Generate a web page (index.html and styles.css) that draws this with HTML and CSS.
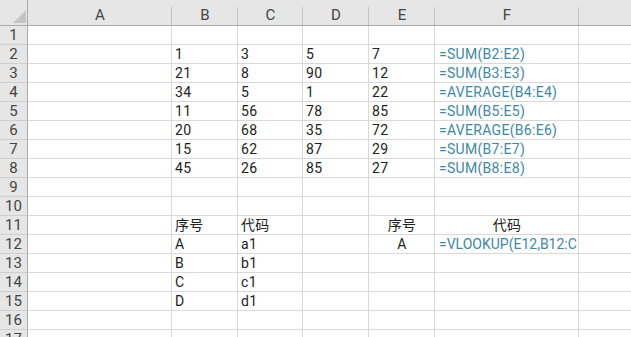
FILE: index.html
```html
<!DOCTYPE html>
<html>
<head>
<meta charset="utf-8">
<link rel="stylesheet" href="styles.css">
</head>
<body>
<div class="sheet">
  <div class="corner"><svg width="13" height="13" viewBox="0 0 13 13"><polygon points="13,0 13,13 0,13" fill="#c4c4c4"/></svg></div>
  <div class="colh">A</div><div class="colh">B</div><div class="colh">C</div><div class="colh">D</div><div class="colh">E</div><div class="colh">F</div><div class="colh last"></div>

  <div class="rowh">1</div><div class="c"></div><div class="c"></div><div class="c"></div><div class="c"></div><div class="c"></div><div class="c"></div><div class="c"></div>
  <div class="rowh">2</div><div class="c"></div><div class="c">1</div><div class="c">3</div><div class="c">5</div><div class="c">7</div><div class="c f">=SUM(B2:E2)</div><div class="c"></div>
  <div class="rowh">3</div><div class="c"></div><div class="c">21</div><div class="c">8</div><div class="c">90</div><div class="c">12</div><div class="c f">=SUM(B3:E3)</div><div class="c"></div>
  <div class="rowh">4</div><div class="c"></div><div class="c">34</div><div class="c">5</div><div class="c">1</div><div class="c">22</div><div class="c f">=AVERAGE(B4:E4)</div><div class="c"></div>
  <div class="rowh">5</div><div class="c"></div><div class="c">11</div><div class="c">56</div><div class="c">78</div><div class="c">85</div><div class="c f">=SUM(B5:E5)</div><div class="c"></div>
  <div class="rowh">6</div><div class="c"></div><div class="c">20</div><div class="c">68</div><div class="c">35</div><div class="c">72</div><div class="c f">=AVERAGE(B6:E6)</div><div class="c"></div>
  <div class="rowh">7</div><div class="c"></div><div class="c">15</div><div class="c">62</div><div class="c">87</div><div class="c">29</div><div class="c f">=SUM(B7:E7)</div><div class="c"></div>
  <div class="rowh">8</div><div class="c"></div><div class="c">45</div><div class="c">26</div><div class="c">85</div><div class="c">27</div><div class="c f">=SUM(B8:E8)</div><div class="c"></div>
  <div class="rowh">9</div><div class="c"></div><div class="c"></div><div class="c"></div><div class="c"></div><div class="c"></div><div class="c"></div><div class="c"></div>
  <div class="rowh">10</div><div class="c"></div><div class="c"></div><div class="c"></div><div class="c"></div><div class="c"></div><div class="c"></div><div class="c"></div>
  <div class="rowh">11</div><div class="c"></div><div class="c">序号</div><div class="c">代码</div><div class="c"></div><div class="c ctr">序号</div><div class="c ctr">代码</div><div class="c"></div>
  <div class="rowh">12</div><div class="c"></div><div class="c">A</div><div class="c">a1</div><div class="c"></div><div class="c ctr">A</div><div class="c f clip">=VLOOKUP(E12,B12:C</div><div class="c"></div>
  <div class="rowh">13</div><div class="c"></div><div class="c">B</div><div class="c">b1</div><div class="c"></div><div class="c"></div><div class="c"></div><div class="c"></div>
  <div class="rowh">14</div><div class="c"></div><div class="c">C</div><div class="c">c1</div><div class="c"></div><div class="c"></div><div class="c"></div><div class="c"></div>
  <div class="rowh">15</div><div class="c"></div><div class="c">D</div><div class="c">d1</div><div class="c"></div><div class="c"></div><div class="c"></div><div class="c"></div>
  <div class="rowh">16</div><div class="c"></div><div class="c"></div><div class="c"></div><div class="c"></div><div class="c"></div><div class="c"></div><div class="c"></div>
  <div class="rowh">17</div><div class="c"></div><div class="c"></div><div class="c"></div><div class="c"></div><div class="c"></div><div class="c"></div><div class="c"></div>
</div>
</body>
</html>
```

FILE: styles.css
```css
html, body {
  margin: 0;
  padding: 0;
  background: #ffffff;
  overflow: hidden;
}

.sheet {
  display: grid;
  grid-template-columns: 28px 144px 66px 65px 66px 66px 144px 60px;
  grid-template-rows: 26px;
  grid-auto-rows: 19px;
  width: 639px;
  font-family: Roboto, "Noto Sans CJK SC", sans-serif;
  font-size: 14px;
  color: #222222;
}

.corner {
  background: #e6e6e6;
  border-bottom: 1px solid #ababab;
  border-right: 1px solid #ababab;
  display: flex;
  align-items: flex-end;
  justify-content: flex-end;
  padding: 0 1px 2px 0;
  box-sizing: border-box;
}

.colh {
  background: linear-gradient(#c3c3c3, #c3c3c3) right bottom / 1px 18px no-repeat, #e6e6e6;
  border-bottom: 1px solid #ababab;
  box-sizing: border-box;
  display: flex;
  align-items: flex-end;
  justify-content: center;
  padding-bottom: 1px;
  font-size: 15px;
  color: #444444;
  line-height: 18px;
}

.colh.last {
  background: #e6e6e6;
}

.rowh {
  background: #e6e6e6;
  border-right: 1px solid #ababab;
  border-bottom: 1px solid #cfcfcf;
  box-sizing: border-box;
  display: flex;
  align-items: flex-end;
  justify-content: center;
  font-size: 15px;
  color: #444444;
  line-height: 18px;
}

.c {
  border-right: 1px solid #d9d9d9;
  border-bottom: 1px solid #d9d9d9;
  box-sizing: border-box;
  display: flex;
  align-items: flex-end;
  padding: 0 2px 0 3px;
  line-height: 18px;
  letter-spacing: 0.3px;
  white-space: nowrap;
  overflow: visible;
}

.c.ctr {
  justify-content: center;
}

.c.f {
  color: #4088a6;
  padding-left: 4px;
}

.c.clip {
  overflow: hidden;
  letter-spacing: 0;
  padding-right: 0;
}
```
